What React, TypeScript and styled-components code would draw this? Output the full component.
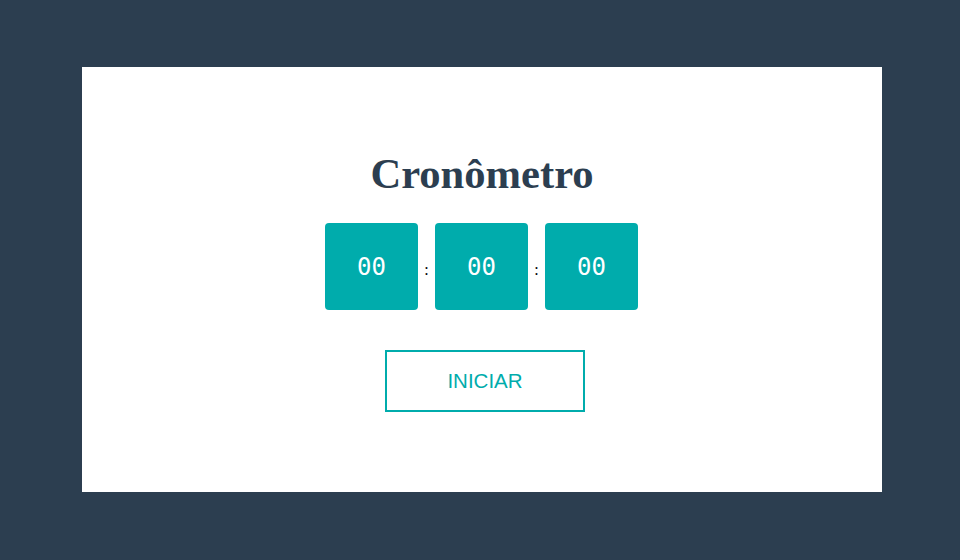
import React from "react";
import styled, { createGlobalStyle } from "styled-components";

const Global = createGlobalStyle`
  html, body { margin: 0; padding: 0; background: #2c3e50; }
  body { font-family: "Liberation Serif", "Times New Roman", serif; }
`;

const Page = styled.div`
  min-height: 560px;
  display: flex;
  align-items: flex-start;
  justify-content: center;
  padding: 67px 0 0 4px;
  box-sizing: border-box;
`;

const Card = styled.div`
  width: 800px;
  height: 425px;
  background: #ffffff;
  box-sizing: border-box;
  padding-top: 83px;
  display: flex;
  flex-direction: column;
  align-items: center;
`;

const Title = styled.h1`
  margin: 0;
  font-family: "Liberation Serif", "Times New Roman", serif;
  font-weight: bold;
  font-size: 42.6px;
  line-height: 48px;
  color: #2c3e50;
`;

const Timer = styled.div`
  margin-top: 25px;
  margin-right: 1px;
  display: flex;
  align-items: baseline;
`;

const Box = styled.div`
  width: 93px;
  height: 87px;
  border-radius: 4px;
  background: #00acac;
  color: #ffffff;
  display: flex;
  align-items: center;
  justify-content: center;
  font-family: "DejaVu Sans Mono", monospace;
  font-size: 24px;
`;

const Colon = styled.span`
  width: 17px;
  text-align: center;
  font-family: "Liberation Serif", serif;
  font-size: 16px;
  color: #000;
`;

const StartButton = styled.button`
  margin-top: 40px;
  margin-left: 6px;
  width: 200px;
  height: 62px;
  border: 2px solid #00acac;
  background: transparent;
  color: #00acac;
  font-family: "Liberation Sans", Arial, sans-serif;
  font-size: 20.5px;
  padding: 0;
  cursor: pointer;
`;

export default function App() {
  return (
    <>
      <Global />
      <Page>
        <Card>
          <Title>Cronômetro</Title>
          <Timer>
            <Box>00</Box>
            <Colon>:</Colon>
            <Box>00</Box>
            <Colon>:</Colon>
            <Box>00</Box>
          </Timer>
          <StartButton>INICIAR</StartButton>
        </Card>
      </Page>
    </>
  );
}
